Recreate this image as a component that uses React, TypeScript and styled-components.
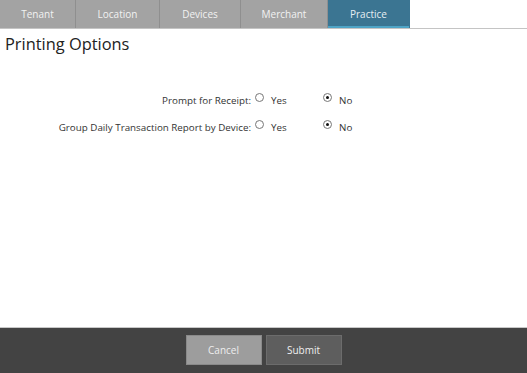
import React from 'react';
import styled, { createGlobalStyle } from 'styled-components';

const Global = createGlobalStyle`
  html, body, #root {
    margin: 0;
    padding: 0;
    height: 100%;
  }
  body {
    font-family: "Open Sans", "Noto Sans", sans-serif;
    background: #ffffff;
  }
`;

const Page = styled.div`
  height: 100vh;
  display: flex;
  flex-direction: column;
`;

const TabBar = styled.div`
  display: flex;
  height: 28px;
  border-bottom: 1px solid #c4c4c4;
`;

const Tab = styled.div<{ $w: number; $active?: boolean }>`
  box-sizing: border-box;
  width: ${(p) => p.$w}px;
  display: flex;
  align-items: center;
  justify-content: center;
  font-size: 10px;
  color: ${(p) => (p.$active ? '#e6eef3' : '#f2f2f2')};
  background: ${(p) => (p.$active ? '#3b7592' : '#a3a3a3')};
  border-right: 1px solid ${(p) => (p.$active ? '#3b7592' : '#8f8f8f')};
  box-shadow: ${(p) => (p.$active ? 'inset 0 -2px 0 #4ea4c6' : 'none')};
`;

const Content = styled.div`
  flex: 1;
  padding: 4px 5px 0;
`;

const Title = styled.h1`
  margin: 0;
  font-size: 16.4px;
  font-weight: 400;
  color: #222;
  line-height: 22px;
`;

const Form = styled.div`
  margin-top: 36px;
  display: grid;
  grid-template-columns: 250px 68px 60px;
  row-gap: 8px;
  align-items: center;
`;

const Label = styled.div`
  text-align: right;
  font-size: 9.8px;
  color: #333;
  padding-right: 4px;
  line-height: 19px;
`;

const Option = styled.label`
  display: flex;
  align-items: center;
  font-size: 9.8px;
  color: #333;
  gap: 7px;
`;

const Radio = styled.span<{ $on?: boolean }>`
  width: 7px;
  height: 7px;
  border-radius: 50%;
  border: 1px solid #777;
  display: inline-flex;
  align-items: center;
  justify-content: center;
  margin-top: -6px;
  &::after {
    content: '';
    width: 3px;
    height: 3px;
    border-radius: 50%;
    background: ${(p) => (p.$on ? '#111' : 'transparent')};
  }
`;

const Footer = styled.div`
  height: 46px;
  background: #434343;
  border-top: 1px solid #c8c8c8;
  display: flex;
  justify-content: center;
  align-items: flex-start;
  gap: 4px;
  padding-top: 7px;
  box-sizing: border-box;
`;

const Button = styled.button<{ $primary?: boolean }>`
  width: 76px;
  height: 30px;
  font-family: inherit;
  font-size: 10px;
  color: #eeeeee;
  background: ${(p) => (p.$primary ? '#5e5e5e' : '#9d9d9d')};
  border: 1px solid ${(p) => (p.$primary ? '#6c6c6c' : '#8a8a8a')};
`;

const tabs = [
  { name: 'Tenant', w: 76 },
  { name: 'Location', w: 84 },
  { name: 'Devices', w: 81 },
  { name: 'Merchant', w: 87 },
  { name: 'Practice', w: 82, active: true },
];

const rows = ['Prompt for Receipt:', 'Group Daily Transaction Report by Device:'];

export default function App() {
  return (
    <Page>
      <Global />
      <TabBar>
        {tabs.map((t) => (
          <Tab key={t.name} $w={t.w} $active={t.active}>
            {t.name}
          </Tab>
        ))}
      </TabBar>
      <Content>
        <Title>Printing Options</Title>
        <Form>
          {rows.map((r) => (
            <React.Fragment key={r}>
              <Label>{r}</Label>
              <Option>
                <Radio />
                Yes
              </Option>
              <Option>
                <Radio $on />
                No
              </Option>
            </React.Fragment>
          ))}
        </Form>
      </Content>
      <Footer>
        <Button>Cancel</Button>
        <Button $primary>Submit</Button>
      </Footer>
    </Page>
  );
}
